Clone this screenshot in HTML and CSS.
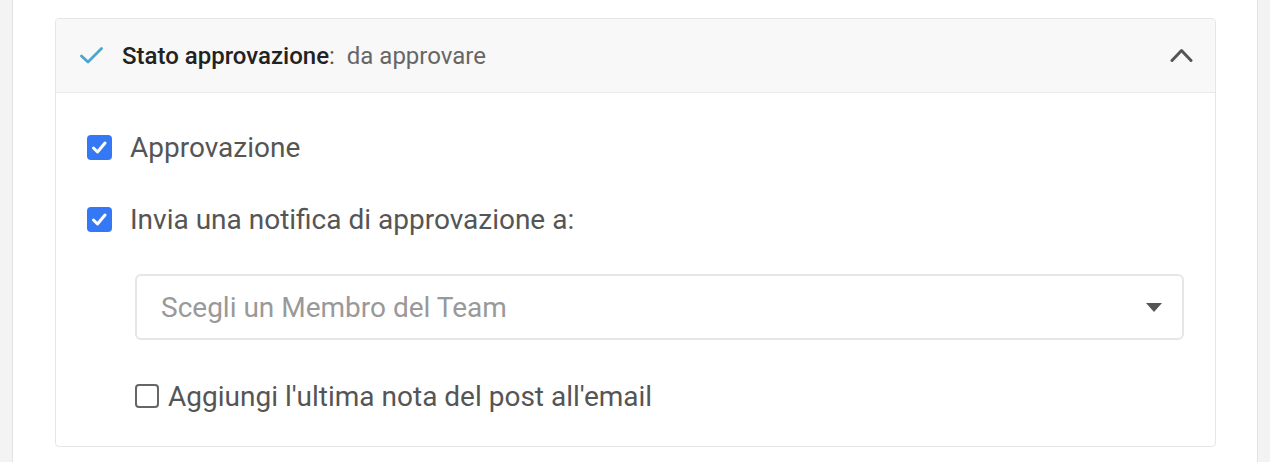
FILE: index.html
```html
<!DOCTYPE html>
<html lang="it">
<head>
    <meta charset="UTF-8">
    <meta name="viewport" content="width=device-width, initial-scale=1.0">
    <title>Stato approvazione</title>
    <link rel="stylesheet" href="styles.css">
</head>
<body>

<div class="page">
    <div class="card">
        <!-- intestazione -->
        <div class="card-header">
            <svg class="ok-icon" width="23" height="17" viewBox="0 0 23 17">
                <path d="M1.5 9 L8 15 L21.5 1.5" fill="none" stroke="#4aa6cf" stroke-width="2.8" stroke-linecap="round" stroke-linejoin="round"/>
            </svg>
            <span class="title">Stato approvazione</span><span class="colon">:</span>
            <span class="status">da approvare</span>
            <svg class="chevron" width="23" height="15" viewBox="0 0 23 15">
                <path d="M2 12.5 L11.5 2.5 L21 12.5" fill="none" stroke="#555" stroke-width="3" stroke-linecap="round" stroke-linejoin="round"/>
            </svg>
        </div>

        <!-- contenuto -->
        <div class="card-body">
            <label class="check-row">
                <span class="box checked">
                    <svg width="17" height="15" viewBox="0 0 17 15"><path d="M2.5 8 L6.5 12 L14 3" fill="none" stroke="#fff" stroke-width="3" stroke-linecap="round" stroke-linejoin="round"/></svg>
                </span>
                Approvazione
            </label>
            <label class="check-row">
                <span class="box checked">
                    <svg width="17" height="15" viewBox="0 0 17 15"><path d="M2.5 8 L6.5 12 L14 3" fill="none" stroke="#fff" stroke-width="3" stroke-linecap="round" stroke-linejoin="round"/></svg>
                </span>
                Invia una notifica di approvazione a:
            </label>

            <div class="select">
                <span class="placeholder">Scegli un Membro del Team</span>
                <span class="caret"></span>
            </div>

            <label class="check-row small">
                <span class="box"></span>
                Aggiungi l'ultima nota del post all'email
            </label>
        </div>
    </div>
</div>

</body>
</html>
```

FILE: styles.css
```css
body {
    margin: 0;
    background-color: #f3f3f3;
    font-family: Roboto, "Liberation Sans", Arial, sans-serif;
}
.page {
    margin: 0 12px;
    height: 462px;
    background-color: #fff;
    border-left: 1px solid #e2e2e2;
    border-right: 1px solid #e2e2e2;
    padding: 18px 41px 0 42px;
    box-sizing: border-box;
}
.card {
    border: 1px solid #e6e6e6;
    border-radius: 4px;
    height: 429px;
    box-sizing: border-box;
}
.card-header {
    display: flex;
    align-items: center;
    height: 73px;
    padding: 0 22px 0 24px;
    background-color: #f8f8f8;
    border-bottom: 1px solid #ebebeb;
    border-radius: 4px 4px 0 0;
    font-size: 24px;
}
.ok-icon {
    margin-right: 19px;
}
.title {
    font-weight: 500;
    color: #222;
}
.colon {
    color: #555;
    margin-right: 12px;
}
.status {
    color: #666;
}
.chevron {
    margin-left: auto;
}
.card-body {
    padding: 41px 31px 0 31px;
}
.check-row {
    display: flex;
    align-items: center;
    font-size: 28px;
    color: #555;
    height: 26px;
    margin-bottom: 46px;
}
.box {
    width: 25px;
    height: 25px;
    flex-shrink: 0;
    box-sizing: border-box;
    border-radius: 4px;
    margin-right: 18px;
    display: flex;
    align-items: center;
    justify-content: center;
}
.box.checked {
    background-color: #3478f6;
}
.select {
    display: flex;
    align-items: center;
    margin: -4px 0 0 48px;
    height: 66px;
    border: 2px solid #e6e6e6;
    border-radius: 6px;
    box-sizing: border-box;
    padding: 0 20px 0 24px;
}
.placeholder {
    font-size: 28px;
    color: #999;
}
.caret {
    margin-left: auto;
    width: 0;
    height: 0;
    border-left: 8px solid transparent;
    border-right: 8px solid transparent;
    border-top: 9px solid #555;
}
.check-row.small {
    margin: 43px 0 0 48px;
}
.check-row.small .box {
    width: 24px;
    height: 24px;
    border: 2px solid #666;
    margin-right: 9px;
}
```
